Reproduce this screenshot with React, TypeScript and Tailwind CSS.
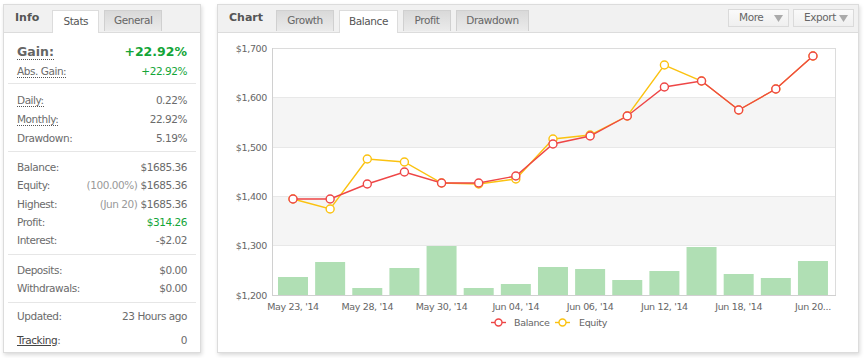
import React from "react";

const FONT = { fontFamily: '"DejaVu Sans", Verdana, sans-serif' };

type Row = { label: string; value: React.ReactNode; note?: string; green?: boolean; dotted?: boolean };

const Label = ({ text, dotted }: { text: string; dotted?: boolean }) => (
  <span className={dotted ? "border-b border-dotted border-[#555] leading-[12px]" : ""}>{text}</span>
);

const Section = ({ rows, pt, pb, rh, last }: { rows: Row[]; pt: string; pb: string; rh: string; last?: boolean }) => (
  <div className={`${pt} ${pb} ${last ? "" : "border-b border-[#e6e6e6]"}`}>
    {rows.map((r) => (
      <div key={r.label} className={`flex items-center justify-between px-[9px] ${rh}`}>
        <Label text={r.label} dotted={r.dotted} />
        <span className={r.green ? "text-[#14a538]" : ""}>
          {r.note && <span className="text-[#999] mr-[3px]">{r.note}</span>}
          {r.value}
        </span>
      </div>
    ))}
  </div>
);

const InfoPanel = () => (
  <div className="w-[198px] h-[349px] bg-white border border-[#dcdcdc] shadow-[1px_2px_4px_rgba(0,0,0,0.15)] flex flex-col">
    <div className="h-[28px] bg-[#f1f1f1] border-b border-[#dcdcdc] flex items-end pl-[11px] relative">
      <span className="font-bold text-[#555] text-[11px] self-center mr-[13px]">Info</span>
      <div className="h-[23px] w-[47px] bg-white border border-[#dcdcdc] border-b-0 mb-[-1px] flex items-center justify-center text-[#555] text-[10.5px] tracking-[-0.4px]">
        Stats
      </div>
      <div className="h-[21px] w-[58px] ml-[5px] mb-[1px] bg-gradient-to-b from-[#d9d9d9] to-[#ebebeb] border border-[#d0d0d0] border-b-0 flex items-center justify-center text-[#666] text-[10.5px] tracking-[-0.4px]">
        General
      </div>
    </div>
    <div className="px-[4px] text-[10.5px] tracking-[-0.45px] text-[#6b6b6b] flex-1 flex flex-col">
      <div className="pt-[10px] pb-[2px] border-b border-[#e6e6e6]">
        <div className="flex items-center justify-between px-[9px] h-[19px] tracking-normal">
          <span className="font-bold text-[12.5px] text-[#666] border-b border-dotted border-[#555] leading-[14px]">Gain:</span>
          <span className="font-bold text-[12.5px] text-[#14a538]">+22.92%</span>
        </div>
        <div className="flex items-center justify-between px-[9px] h-[19px]">
          <Label text="Abs. Gain:" dotted />
          <span className="text-[#14a538]">+22.92%</span>
        </div>
      </div>
      <Section
        pt="pt-[7px]"
        pb="pb-[3px]"
        rh="h-[19px]"
        rows={[
          { label: "Daily:", value: "0.22%", dotted: true },
          { label: "Monthly:", value: "22.92%", dotted: true },
          { label: "Drawdown:", value: "5.19%" },
        ]}
      />
      <Section
        pt="pt-[7px]"
        pb="pb-[4px]"
        rh="h-[18.2px]"
        rows={[
          { label: "Balance:", value: "$1685.36" },
          { label: "Equity:", value: "$1685.36", note: "(100.00%)" },
          { label: "Highest:", value: "$1685.36", note: "(Jun 20)" },
          { label: "Profit:", value: "$314.26", green: true },
          { label: "Interest:", value: "-$2.02" },
        ]}
      />
      <Section
        pt="pt-[7px]"
        pb="pb-[4px]"
        rh="h-[18px]"
        rows={[
          { label: "Deposits:", value: "$0.00" },
          { label: "Withdrawals:", value: "$0.00" },
        ]}
      />
      <div className="pt-[5px]">
        <div className="flex items-center justify-between px-[9px] h-[18px]">
          <span>Updated:</span>
          <span>23 Hours ago</span>
        </div>
        <div className="flex items-center justify-between px-[9px] h-[18px] mt-[6px]">
          <span>
            <span className="underline text-[#444]">Tracking</span>:
          </span>
          <span>0</span>
        </div>
      </div>
    </div>
  </div>
);

const Tab = ({ text, w, active }: { text: string; w: string; active?: boolean }) =>
  active ? (
    <div className={`h-[23px] ${w} bg-white border border-[#dcdcdc] border-b-0 mb-[-1px] flex items-center justify-center text-[#555] text-[10.5px] tracking-[-0.4px]`}>
      {text}
    </div>
  ) : (
    <div className={`h-[21px] ${w} mb-[1px] bg-gradient-to-b from-[#d9d9d9] to-[#ebebeb] border border-[#d0d0d0] border-b-0 flex items-center justify-center text-[#666] text-[10.5px] tracking-[-0.4px]`}>
      {text}
    </div>
  );

const DropBtn = ({ text }: { text: string }) => (
  <div className="h-[18px] w-[61px] bg-gradient-to-b from-[#fafafa] to-[#efefef] border border-[#dadada] flex items-center justify-between pl-[10px] pr-[5px] text-[#666] text-[10.5px] tracking-[-0.4px]">
    <span>{text}</span>
    <svg width="9" height="7" viewBox="0 0 9 7">
      <path d="M0 0 L9 0 L4.5 7 Z" fill="#aaa" />
    </svg>
  </div>
);

const red = [199, 199, 184, 172, 183, 183, 176, 144, 136, 116, 87, 81, 110, 89, 56];
const yellow = [199, 209, 159, 162, 183, 184, 179, 139, 135, 116, 65, 81, 110, 89, 56];
const bars = [277, 262, 288, 268, 246, 288, 284, 267, 269, 280, 271, 247, 274, 278, 261];
const px = (i: number) => 293 + i * 37.14;
const xLabels = ["May 23, '14", "May 28, '14", "May 30, '14", "Jun 04, '14", "Jun 06, '14", "Jun 12, '14", "Jun 18, '14", "Jun 20..."];
const yTicks = [
  { y: 48, t: "$1,700" },
  { y: 97, t: "$1,600" },
  { y: 147, t: "$1,500" },
  { y: 196, t: "$1,400" },
  { y: 245, t: "$1,300" },
  { y: 295, t: "$1,200" },
];

const lbl = { fontSize: 9.5, letterSpacing: -0.35, fill: "#666" };

const Chart = () => (
  <svg width="640" height="318" viewBox="218 33 640 318" style={FONT}>
    <rect x="272" y="97" width="563" height="50" fill="#f5f5f5" />
    <rect x="272" y="196" width="563" height="49" fill="#f5f5f5" />
    {yTicks.map((t) => (
      <g key={t.t}>
        <line x1="272" x2="835" y1={t.y + 0.5} y2={t.y + 0.5} stroke="#e8e8e8" />
        <text x="267" y={t.y + 4} textAnchor="end" style={lbl}>
          {t.t}
        </text>
      </g>
    ))}
    <line x1="272" x2="835" y1="48.5" y2="48.5" stroke="#dcdcdc" />
    <line x1="272.5" x2="272.5" y1="48" y2="295" stroke="#d0d0d0" />
    <line x1="835.5" x2="835.5" y1="48" y2="295" stroke="#dcdcdc" />
    {bars.map((b, i) => (
      <rect key={i} x={px(i) - 15} y={b} width="30" height={295 - b} fill="#b0dfb4" />
    ))}
    <line x1="272" x2="836" y1="295.5" y2="295.5" stroke="#d0d0d0" />
    {xLabels.map((l, i) => (
      <text key={l} x={px(i * 2)} y="310" textAnchor="middle" style={lbl}>
        {l}
      </text>
    ))}
    <polyline points={yellow.map((y, i) => `${px(i)},${y}`).join(" ")} fill="none" stroke="#fbc210" strokeWidth="1.4" />
    {yellow.map((y, i) => (
      <circle key={i} cx={px(i)} cy={y} r="4" fill="#fff" stroke="#fbc210" strokeWidth="1.4" />
    ))}
    <polyline points={red.map((y, i) => `${px(i)},${y}`).join(" ")} fill="none" stroke="#ee4646" strokeWidth="1.4" />
    {red.map((y, i) => (
      <circle key={i} cx={px(i)} cy={y} r="4" fill="#fff" stroke="#ee4646" strokeWidth="1.4" />
    ))}
    <line x1="491" x2="506" y1="322.5" y2="322.5" stroke="#ee4646" strokeWidth="1.4" />
    <circle cx="498.5" cy="322.5" r="3.5" fill="#fff" stroke="#ee4646" strokeWidth="1.4" />
    <text x="514" y="326" style={lbl}>
      Balance
    </text>
    <line x1="555" x2="570" y1="322.5" y2="322.5" stroke="#fbc210" strokeWidth="1.4" />
    <circle cx="562.5" cy="322.5" r="3.5" fill="#fff" stroke="#fbc210" strokeWidth="1.4" />
    <text x="579" y="326" style={lbl}>
      Equity
    </text>
  </svg>
);

const ChartPanel = () => (
  <div className="w-[642px] h-[349px] bg-white border border-[#dcdcdc] shadow-[1px_2px_4px_rgba(0,0,0,0.15)] flex flex-col">
    <div className="h-[28px] bg-[#f1f1f1] border-b border-[#dcdcdc] flex items-end pl-[11px] pr-[4px]">
      <span className="font-bold text-[#555] text-[11px] self-center mr-[13px]">Chart</span>
      <div className="flex items-end gap-[5px]">
        <Tab text="Growth" w="w-[58px]" />
        <Tab text="Balance" w="w-[59px]" active />
        <Tab text="Profit" w="w-[48px]" />
        <Tab text="Drawdown" w="w-[73px]" />
      </div>
      <div className="ml-auto self-start mt-[4px] flex gap-[4px]">
        <DropBtn text="More" />
        <DropBtn text="Export" />
      </div>
    </div>
    <Chart />
  </div>
);

export default function App() {
  return (
    <div className="w-[864px] h-[358px] bg-white pt-[4px] pl-[3px] flex gap-[16px]" style={FONT}>
      <InfoPanel />
      <ChartPanel />
    </div>
  );
}
